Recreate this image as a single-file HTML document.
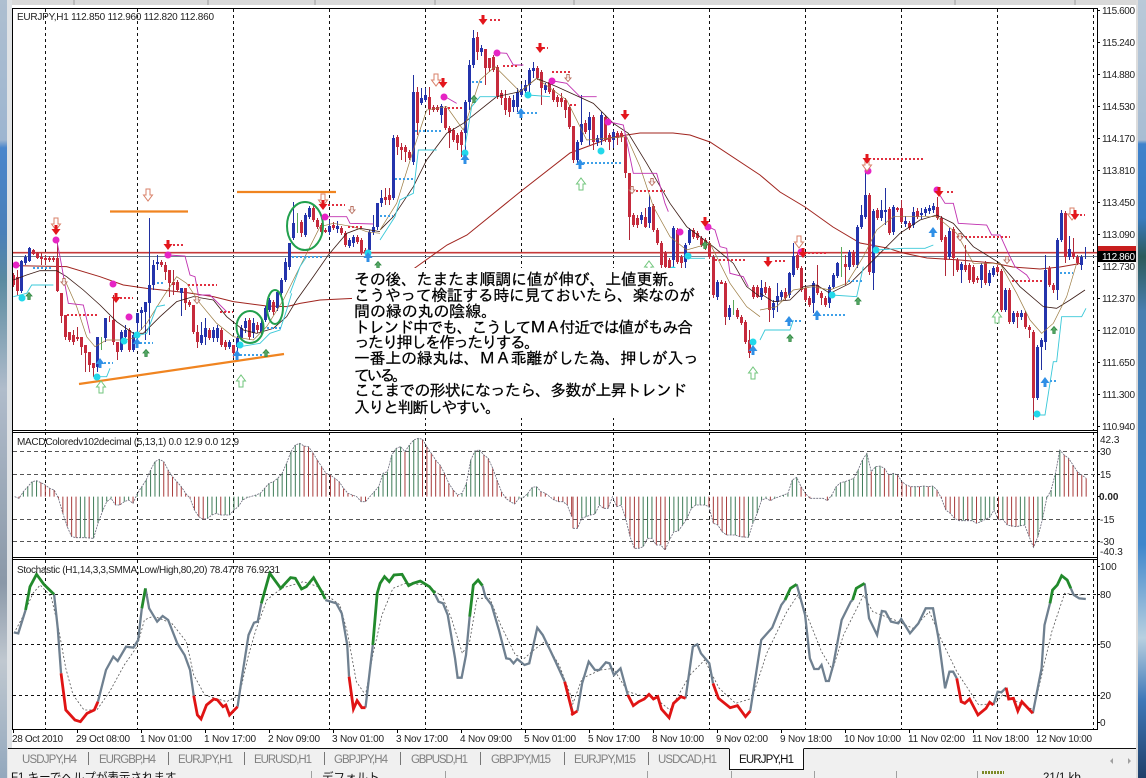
<!DOCTYPE html>
<html><head><meta charset="utf-8"><style>
html,body{margin:0;padding:0;background:#fff;overflow:hidden}
svg{display:block}
text{font-family:"Liberation Sans",Arial,sans-serif}
circle{r:3.5px}
.l{vector-effect:non-scaling-stroke;fill:none}
.ax{font-size:10px;fill:#222}
.t{font-size:10px;fill:#222}
.tb{font-size:11.5px;fill:#808080}
.jp{font-family:"IPAGothic","Noto Sans CJK JP",sans-serif;font-size:16px;fill:#000;stroke:#000;stroke-width:.25px}
</style></head><body>
<svg xmlns="http://www.w3.org/2000/svg" width="1146" height="778" viewBox="0 0 1146 778">
<defs>
<linearGradient id="fl" x1="0" y1="0" x2="0" y2="1">
<stop offset="0" stop-color="#aebfd0"/><stop offset=".18" stop-color="#9db5d0"/><stop offset=".19" stop-color="#4a86cc"/><stop offset=".3" stop-color="#4a7fb8"/><stop offset=".36" stop-color="#5a8aa0"/><stop offset=".5" stop-color="#b0bccb"/><stop offset=".75" stop-color="#8a98a8"/><stop offset=".85" stop-color="#c0c8d0"/><stop offset="1" stop-color="#93a8bd"/>
</linearGradient>
<linearGradient id="fr" x1="0" y1="0" x2="0" y2="1">
<stop offset="0" stop-color="#b9c9d8"/><stop offset=".18" stop-color="#a8bdd3"/><stop offset=".185" stop-color="#3f82cc"/><stop offset=".28" stop-color="#3a7cc0"/><stop offset=".33" stop-color="#2c5a5a"/><stop offset=".4" stop-color="#4a7fb0"/><stop offset=".7" stop-color="#3f86cc"/><stop offset=".82" stop-color="#b8d0e0"/><stop offset=".9" stop-color="#3f78b8"/><stop offset="1" stop-color="#20406a"/>
</linearGradient>
<path id="rd" d="M-1.5-5H1.5V-1H4.5L0 5-4.5-1H-1.5Z" fill="#e3161c"/>
<path id="bu" d="M-1.5 5H1.5V1H4.5L0-5-4.5 1H-1.5Z" fill="#2f8fe6"/>
<path id="hd" d="M-2-6H2V0H4.5L0 6-4.5 0H-2Z" fill="#fff" stroke="#d88068" stroke-width="1"/>
<path id="hds" d="M-1.2-3.5H1.2V0H3L0 3.5-3 0H-1.2Z" fill="#fff" stroke="#b87060" stroke-width=".9"/>
<path id="hu" d="M-2 6H2V0H4.5L0-6-4.5 0H-2Z" fill="#fff" stroke="#72c67c" stroke-width="1"/>
<path id="hus" d="M-1.2 3.5H1.2V0H3L0-3.5-3 0H-1.2Z" fill="#58a868" stroke="#2f8840" stroke-width=".8"/>
</defs>

<rect width="1146" height="778" fill="#fff"/>
<rect x="0" y="0" width="1146" height="5" fill="#d9d9d9"/>
<path d="M74 0V5M208 0V5M315 0V5M435 0V5M574 0V5M955 0V5M1075 0V5" stroke="#9a9a9a"/>
<rect x="0" y="0" width="7" height="778" fill="url(#fl)"/>
<rect x="7" y="0" width="5" height="778" fill="#dfe2e5"/>
<rect x="1136" y="0" width="2" height="778" fill="#dcdcdc"/>
<rect x="1138" y="0" width="8" height="778" fill="url(#fr)"/>

<!-- grid -->
<g stroke="#111" stroke-width="1" stroke-dasharray="3 3" fill="none">
<path d="M45.5 9V430M137.5 9V430M233.5 9V430M329.5 9V430M425.5 9V430M521.5 9V430M613.5 9V430M709.5 9V430M805.5 9V430M901.5 9V430M997.5 9V430M1093.5 9V430"/>
<path d="M45.5 432V557M137.5 432V557M233.5 432V557M329.5 432V557M425.5 432V557M521.5 432V557M613.5 432V557M709.5 432V557M805.5 432V557M901.5 432V557M997.5 432V557M1093.5 432V557"/>
<path d="M45.5 560V729M137.5 560V729M233.5 560V729M329.5 560V729M425.5 560V729M521.5 560V729M613.5 560V729M709.5 560V729M805.5 560V729M901.5 560V729M997.5 560V729M1093.5 560V729"/>
<path d="M13 594.5H1097M13 644.5H1097M13 695.5H1097"/>
</g>
<path d="M13 451.5H1097M13 474.5H1097M13 519.5H1097M13 541.5H1097" stroke="#555" stroke-dasharray="4 3" fill="none"/>

<!-- price lines -->
<path d="M13 252.7H1097" stroke="#c63a3a" stroke-width="1.6"/>
<path d="M13 256.5H1097" stroke="#6f8090" stroke-width="1"/>

<!-- slow MA -->
<g transform="scale(.33333)"><path class="l" stroke="#a0241e" stroke-width="1" d="M40 797L200 800 300 830 370 855 440 865 560 878 640 890 700 905 800 918 860 920 900 910 960 900 1060 895"/></g>
<path class="l" stroke="#a0241e" stroke-width="1" d="M412 270L447 245 467 235 520 192 570 153 613 137 640 133 673 133 690 135 710 142 760 175 780 192 805 207 833 227 860 243 887 248 903 253 927 258 960 260 993 263 1013 267 1040 269 1060 267 1083 263"/>

<!-- candle wicks -->
<path stroke="#2030a0" stroke-width="1" fill="none" d="M21.5 260V293M25.5 255V265M29.5 247V262M97.5 337V372M105.5 318V342M121.5 330V352M125.5 325V340M133.5 332V352M137.5 313V345M141.5 307V330M145.5 302V340M149.5 218V335M153.5 260V290M157.5 255V270M181.5 288V316M201.5 322V345M205.5 318V345M213.5 327V342M217.5 325V342M229.5 340V349M237.5 336V352M241.5 325V340M245.5 318V333M253.5 318V338M261.5 320V335M265.5 306V322M269.5 298V312M277.5 290V311M281.5 278V295M285.5 258V282M289.5 243V270M293.5 202V240M305.5 213V237M309.5 206V219M329.5 220V235M337.5 221V233M349.5 238V248M353.5 235V247M369.5 230V255M373.5 215V235M377.5 203V230M381.5 190V207M393.5 135V200M413.5 75V165M421.5 88V105M425.5 88V102M441.5 104V123M465.5 100V150M469.5 60V110M473.5 30V68M481.5 45V56M513.5 95V112M517.5 88V112M521.5 84V97M525.5 80V93M529.5 68V95M533.5 62V78M545.5 83V93M577.5 140V163M581.5 95V145M589.5 112V145M597.5 135V146M601.5 112V145M613.5 130V148M641.5 212V224M649.5 195V228M673.5 226V270M685.5 243V268M689.5 228V245M717.5 280V300M729.5 305V320M761.5 280V300M773.5 300V318M777.5 283V312M781.5 290V300M789.5 272V298M793.5 243V277M813.5 281V313M829.5 285V308M833.5 273V289M837.5 262V278M849.5 250V270M857.5 225V268M861.5 205V229M865.5 172V219M873.5 209V290M881.5 200V221M885.5 188V225M893.5 205V235M905.5 216V227M913.5 207V228M921.5 208V219M925.5 207V216M929.5 205V214M933.5 203V213M949.5 228V259M961.5 262V283M981.5 263V288M989.5 270V286M993.5 266V277M1005.5 288V312M1013.5 311V324M1021.5 310V320M1037.5 345V400M1041.5 338V370M1045.5 255V350M1057.5 238V300M1061.5 210V242M1069.5 236V260M1081.5 255V270M1085.5 247V259"/>
<path stroke="#b02838" stroke-width="1" fill="none" d="M13.5 273V287M17.5 270V295M33.5 249V255M37.5 252V259M41.5 253V265M45.5 255V265M49.5 256V262M53.5 256V262M57.5 240V292M61.5 293V323M65.5 315V340M69.5 332V342M73.5 330V345M77.5 327V341M81.5 337V355M85.5 345V372M89.5 352V372M93.5 363V377M109.5 316V322M113.5 295V345M117.5 342V360M129.5 328V352M161.5 260V267M165.5 262V280M169.5 270V297M173.5 270V295M177.5 280V292M185.5 288V310M189.5 300V307M193.5 305V334M197.5 325V348M209.5 328V340M221.5 328V347M225.5 340V350M233.5 345V358M249.5 318V340M257.5 322V333M273.5 300V315M301.5 220V237M313.5 206V222M317.5 218V229M321.5 223V234M325.5 228V233M333.5 222V230M341.5 226V235M345.5 231V247M357.5 235V244M361.5 238V255M365.5 248V255M385.5 188V205M389.5 188V205M397.5 135V155M401.5 143V160M405.5 145V162M409.5 150V160M417.5 87V135M429.5 87V115M433.5 105V112M437.5 105V112M445.5 106V130M449.5 126V148M453.5 128V142M457.5 133V150M461.5 130V157M477.5 32V60M485.5 49V85M489.5 58V72M493.5 55V72M497.5 65V99M501.5 90V105M505.5 90V115M509.5 96V117M537.5 66V80M541.5 70V105M549.5 80V94M553.5 88V102M557.5 95V107M561.5 93V107M565.5 98V118M569.5 105V129M573.5 126V163M585.5 120V134M593.5 115V150M605.5 115V142M609.5 133V150M617.5 131V145M621.5 131V142M625.5 135V178M629.5 173V240M633.5 213V227M637.5 215V228M645.5 208V228M653.5 204V232M657.5 228V245M661.5 241V270M665.5 251V270M669.5 258V270M677.5 228V264M681.5 255V268M693.5 228V239M697.5 231V240M701.5 236V247M705.5 238V250M709.5 241V259M713.5 255V298M721.5 280V284M725.5 281V325M737.5 308V319M741.5 315V325M745.5 320V344M749.5 330V358M753.5 285V299M757.5 285V298M765.5 282V295M769.5 286V322M785.5 288V300M797.5 253V270M801.5 266V292M805.5 286V302M809.5 296V307M817.5 265V295M821.5 291V305M825.5 296V307M845.5 255V285M853.5 250V267M869.5 193V275M877.5 208V220M889.5 207V235M897.5 207V212M901.5 200V224M909.5 221V230M917.5 208V219M937.5 197V220M941.5 216V242M945.5 235V276M953.5 227V276M957.5 258V272M965.5 245V272M969.5 263V283M973.5 265V284M977.5 276V283M985.5 261V285M997.5 265V274M1001.5 269V312M1009.5 288V324M1017.5 311V328M1025.5 311V329M1029.5 325V338M1033.5 330V420M1049.5 266V287M1053.5 283V293M1065.5 211V263M1073.5 238V259M1077.5 255V265"/>
<!-- candle bodies -->
<path stroke="#2434ac" stroke-width="3" fill="none" d="M21.5 261V291M25.5 257V263M29.5 248V261M97.5 337V367M105.5 318V338M121.5 332V350M125.5 330V337M133.5 335V350M137.5 313V323M141.5 310V313M145.5 302V312M149.5 285V303M153.5 265V285M157.5 262V264M181.5 288V293M201.5 335V343M205.5 328V337M213.5 330V338M217.5 328V338M229.5 342V347M237.5 338V347M241.5 328V338M245.5 321V328M253.5 323V333M261.5 323V332M265.5 308V320M269.5 300V310M277.5 292V308M281.5 280V293M285.5 262V280M289.5 243V267M293.5 223V238M305.5 215V235M309.5 208V217M329.5 226V232M337.5 226V229M349.5 240V246M353.5 237V243M369.5 232V250M373.5 227V232M377.5 203V227M381.5 198V203M393.5 138V198M413.5 92V162M421.5 98V103M425.5 95V100M441.5 106V115M465.5 102V133M469.5 65V102M473.5 38V65M481.5 48V52M513.5 100V107M517.5 92V107M521.5 89V95M525.5 85V91M529.5 70V85M533.5 68V71M545.5 85V90M577.5 142V160M581.5 124V142M589.5 117V130M597.5 138V142M601.5 115V140M613.5 132V140M641.5 215V220M649.5 207V223M673.5 228V260M685.5 245V262M689.5 230V243M717.5 282V297M729.5 308V317M761.5 288V297M773.5 303V310M777.5 296V302M781.5 292V297M789.5 273V295M793.5 256V275M813.5 283V303M829.5 287V303M833.5 275V287M837.5 263V276M849.5 252V267M857.5 227V265M861.5 215V227M865.5 195V217M873.5 211V273M881.5 210V218M885.5 210V212M893.5 207V232M905.5 221V224M913.5 212V225M921.5 213V215M925.5 209V213M929.5 208V211M933.5 206V210M949.5 231V257M961.5 264V270M981.5 265V280M989.5 273V283M993.5 268V275M1005.5 290V310M1013.5 313V322M1021.5 313V317M1037.5 347V398M1041.5 340V347M1045.5 270V342M1057.5 240V290M1061.5 213V240M1069.5 249V257M1081.5 257V265"/>
<path stroke="#c62a3c" stroke-width="3" fill="none" d="M13.5 275V285M17.5 277V291M33.5 250V254M37.5 253V258M41.5 257V259M45.5 258V260M49.5 258V260M53.5 258V260M57.5 258V291M61.5 293V316M65.5 315V337M69.5 332V340M73.5 335V342M77.5 337V339M81.5 337V347M85.5 345V353M89.5 352V365M93.5 363V368M113.5 320V342M117.5 342V352M129.5 330V350M161.5 262V265M165.5 265V272M169.5 270V283M173.5 282V285M177.5 282V290M185.5 288V303M189.5 302V305M193.5 305V332M197.5 332V342M209.5 330V338M221.5 330V345M225.5 342V347M233.5 345V353M249.5 320V337M257.5 325V330M273.5 302V312M301.5 222V233M313.5 208V220M317.5 220V227M321.5 225V232M325.5 230V232M333.5 225V228M341.5 228V233M345.5 233V245M357.5 237V242M361.5 240V253M365.5 250V253M385.5 197V200M389.5 195V200M397.5 137V147M401.5 147V150M405.5 147V152M409.5 152V158M417.5 92V123M429.5 97V109M433.5 107V110M437.5 107V110M445.5 108V128M449.5 128V133M453.5 130V140M457.5 135V143M461.5 132V145M477.5 37V52M485.5 49V68M489.5 58V68M493.5 57V70M497.5 67V97M501.5 93V98M505.5 98V110M509.5 98V112M537.5 68V78M541.5 72V88M549.5 82V92M553.5 90V100M557.5 97V102M561.5 98V102M565.5 100V110M569.5 107V127M573.5 126V160M585.5 123V132M593.5 117V142M605.5 117V140M609.5 135V142M617.5 133V138M621.5 133V137M625.5 137V173M629.5 173V217M633.5 215V225M637.5 218V225M645.5 217V227M653.5 206V230M657.5 230V243M661.5 243V265M665.5 253V267M669.5 260V272M677.5 230V262M681.5 257V263M693.5 230V237M697.5 233V238M701.5 238V245M705.5 240V248M709.5 243V257M713.5 257V295M721.5 282V284M725.5 283V317M737.5 310V317M741.5 317V323M745.5 322V342M749.5 340V353M753.5 287V297M757.5 287V297M765.5 287V293M769.5 288V310M785.5 292V298M797.5 255V268M801.5 268V290M805.5 288V300M809.5 298V305M817.5 285V293M821.5 293V298M825.5 298V305M845.5 264V267M853.5 252V265M869.5 195V272M877.5 210V218M889.5 209V233M897.5 208V210M901.5 208V222M909.5 223V228M917.5 211V217M937.5 207V218M941.5 218V240M945.5 237V260M953.5 229V258M957.5 260V270M965.5 265V270M969.5 265V280M973.5 267V282M977.5 278V280M985.5 263V283M997.5 267V272M1001.5 271V310M1009.5 290V322M1017.5 313V317M1025.5 313V327M1029.5 327V330M1033.5 332V398M1049.5 268V285M1053.5 285V290M1065.5 213V257M1073.5 252V257M1077.5 257V263"/>
<path stroke="#58a858" stroke-width="1" fill="none" d="M101.5 337V350M297.5 213V233M733.5 300V315M841.5 247V277"/>

<!-- MAs z1 -->
<g transform="scale(.33333)">
<path class="l" stroke="#3a1a14" stroke-width=".8" d="M40 840L80 825 120 812 170 812 200 830 250 870 300 915 350 965 400 1000 430 1000 480 950 530 905 580 890 640 900 680 950 730 990 770 1000 820 985 860 950 890 900 940 830 985 765 1040 700 1080 685 1140 695"/>
<path class="l" stroke="#9a7a40" stroke-width=".7" d="M190 830L230 920 260 1010 285 1040 320 1020 370 1020 400 1015 440 970 490 890 530 830 560 850 600 910 650 970 700 1010 760 1020 800 980 850 900 910 780 960 680 1000 670 1060 680 1100 695 1140 700"/>
<path class="l" stroke="#38c8d8" stroke-width=".9" d="M40 890L80 880 95 855 160 855M400 1010L440 1000 470 920 495 915M280 1130L320 1130 330 1105M720 1040L780 1030 810 1000 840 990 860 930 875 880M870 880L900 800 920 770"/>
<path class="l" stroke="#c030b0" stroke-width=".9" d="M170 720L180 770 205 910 250 915 270 1000M505 765L555 768 570 825 585 830 595 885 630 885 680 935M975 650L1040 650 1050 670 1120 672"/>
</g>
<g transform="translate(380,0) scale(.33333)">
<path class="l" stroke="#3a1a14" stroke-width=".8" d="M0 690L40 650 100 560 140 480 200 400 250 370 350 290 420 275 470 235 530 260 640 310 700 370 745 400 800 490 870 610 920 680 1000 740 1060 790 1100 860 1140 890"/>
<path class="l" stroke="#9a7a40" stroke-width=".7" d="M0 690L50 610 100 450 140 330 200 320 250 390 300 240 345 200 420 275 470 235 560 300 620 420 740 410 780 500 820 620 870 710 920 750 990 730 1050 850 1100 920 1140 950"/>
<path class="l" stroke="#38c8d8" stroke-width=".9" d="M0 720L45 650 60 600 100 580 115 450 170 450M255 440L265 380 275 320 300 290 350 290M445 285L510 290M925 775L975 775"/>
<path class="l" stroke="#c030b0" stroke-width=".9" d="M195 290L230 310M350 158L380 160 400 195 430 195M520 243L560 250 600 290 650 290M685 365L730 375 760 520 830 520 855 610 865 635M985 680L1005 690 1020 740 1040 745 1050 820 1090 830 1105 860"/>
</g>
<g transform="translate(760,0) scale(.33333)">
<path class="l" stroke="#3a1a14" stroke-width=".8" d="M0 880L40 905 90 900 130 860 170 855 210 880 270 850 320 800 360 760 420 700 480 660 530 645 580 670 640 740 720 790 780 860 850 920 890 925 930 900 975 870"/>
<path class="l" stroke="#9a7a40" stroke-width=".7" d="M0 930L50 920 100 870 160 860 210 870 260 850 310 770 350 690 400 650 470 650 530 650 590 700 640 790 720 790 770 880 810 960 845 1000 880 970 920 890 950 790"/>
<path class="l" stroke="#38c8d8" stroke-width=".9" d="M0 1020L15 990 90 990 100 960M215 885L290 890 310 800M345 750L430 745 495 745 520 735M830 1245L855 1245 880 1085 890 1085 905 950 965 950 978 925"/>
<path class="l" stroke="#c030b0" stroke-width=".9" d="M530 570L555 610 580 610 595 670 680 675 695 705 720 705 745 760 765 800 800 825 810 840"/>
</g>

<!-- dotted levels -->
<path stroke="#e03040" stroke-width="2" stroke-dasharray="2 2" fill="none" d="M67 315H97M120 298H133M173 245H185M188 285H217M220 312H233M328 205H345M348 227H363M490 20H502M448 108H462M503 66H517M543 48H548M552 72H570M570 105H577M632 191H665M715 260H745M775 261H785M808 253H828M873 159H925M947 192H953M957 237H1010M1012 281H1042M1080 215H1085"/>
<path stroke="#3ea0e8" stroke-width="2" stroke-dasharray="2 2" fill="none" d="M33 268H53M100 363H113M140 343H153M157 283H165M240 355H262M292 257H322M267 328H282M472 82H482M415 131H442M395 179H413M380 216H393M523 113H537M583 163H622M795 321H802M823 315H845M848 281H862M1050 381H1058M1060 273H1073"/>

<!-- orange trend lines & circles -->
<path d="M79 384L284 354M110 211.5H188M237 192H336" stroke="#f08420" stroke-width="2.2" fill="none"/>
<g fill="none" stroke="#22a04e" stroke-width="2">
<ellipse cx="305" cy="226" rx="18" ry="24"/><ellipse cx="250" cy="327" rx="13.5" ry="16"/><ellipse cx="275" cy="307" rx="8" ry="17"/>
</g>

<!-- magenta / cyan dots -->
<g fill="#e624c4"><circle cx="16" cy="265" r="3"/><circle cx="56" cy="240" r="3"/><circle cx="113" cy="284" r="3"/><circle cx="129" cy="317" r="3"/><circle cx="168" cy="255" r="3"/><circle cx="325" cy="217" r="3"/><circle cx="444" cy="97" r="3"/><circle cx="497" cy="53" r="3"/><circle cx="552" cy="81" r="3"/><circle cx="608" cy="122" r="3"/><circle cx="680" cy="232" r="3"/><circle cx="708" cy="227" r="3"/><circle cx="801" cy="252" r="3"/><circle cx="868" cy="171" r="3"/><circle cx="937" cy="190" r="3"/></g>
<g fill="#22d8ea"><circle cx="22" cy="298" r="3"/><circle cx="97" cy="377" r="3"/><circle cx="124" cy="341" r="3"/><circle cx="137" cy="335" r="3"/><circle cx="240" cy="345" r="3"/><circle cx="368" cy="253" r="3"/><circle cx="465" cy="153" r="3"/><circle cx="528" cy="95" r="3"/><circle cx="601" cy="151" r="3"/><circle cx="688" cy="256" r="3"/><circle cx="673" cy="270" r="3"/><circle cx="753" cy="342" r="3"/><circle cx="832" cy="295" r="3"/><circle cx="876" cy="250" r="3"/><circle cx="1037" cy="414" r="3"/></g>

<!-- arrows -->
<use href="#hd" x="56" y="224"/><use href="#hd" x="148" y="195"/><use href="#hd" x="323" y="200"/><use href="#hd" x="436" y="80"/><use href="#hd" x="867" y="165"/><use href="#hd" x="799" y="242"/><use href="#hd" x="1072" y="214"/>
<use href="#hds" x="64" y="282"/><use href="#hds" x="352" y="210"/><use href="#hds" x="197" y="300"/><use href="#hds" x="568" y="78"/><use href="#hds" x="652" y="182"/><use href="#hds" x="632" y="190"/><use href="#hds" x="960" y="237"/><use href="#hds" x="1007" y="260"/>
<use href="#rd" x="56" y="230"/><use href="#rd" x="116" y="298"/><use href="#rd" x="168" y="245"/><use href="#rd" x="323" y="205"/><use href="#rd" x="483" y="20"/><use href="#rd" x="443" y="83"/><use href="#rd" x="540" y="48"/><use href="#rd" x="625" y="115"/><use href="#rd" x="705" y="222"/><use href="#rd" x="768" y="262"/><use href="#rd" x="803" y="253"/><use href="#rd" x="867" y="159"/><use href="#rd" x="939" y="192"/><use href="#rd" x="1075" y="215"/>
<use href="#bu" x="100" y="363"/><use href="#bu" x="137" y="343"/><use href="#bu" x="237" y="355"/><use href="#bu" x="368" y="257"/><use href="#bu" x="465" y="159"/><use href="#bu" x="521" y="113"/><use href="#bu" x="580" y="164"/><use href="#bu" x="753" y="350"/><use href="#bu" x="789" y="321"/><use href="#bu" x="817" y="315"/><use href="#bu" x="933" y="232"/><use href="#bu" x="1045" y="382"/>
<use href="#hu" x="101" y="387"/><use href="#hu" x="241" y="381"/><use href="#hu" x="581" y="184"/><use href="#hu" x="649" y="267"/><use href="#hu" x="753" y="373"/><use href="#hu" x="997" y="317"/>
<use href="#hus" x="29" y="296"/><use href="#hus" x="146" y="353"/><use href="#hus" x="266" y="353"/><use href="#hus" x="378" y="265"/><use href="#hus" x="474" y="99"/><use href="#hus" x="705" y="245"/><use href="#hus" x="790" y="338"/><use href="#hus" x="858" y="301"/><use href="#hus" x="1054" y="330"/>

<!-- annotation box -->
<rect x="352" y="268" width="350" height="150" fill="#fff"/>
<g class="jp">
<text class="jp" x="354" y="285" textLength="330">その後、たまたま順調に値が伸び、上値更新。</text>
<text class="jp" x="354" y="301" textLength="341">こうやって検証する時に見ておいたら、楽なのが</text>
<text class="jp" x="354" y="317" textLength="143">間の緑の丸の陰線。</text>
<text class="jp" x="354" y="333" textLength="339">トレンド中でも、こうしてＭＡ付近では値がもみ合</text>
<text class="jp" x="354" y="348" textLength="186">ったり押しを作ったりする。</text>
<text class="jp" x="354" y="364" textLength="345">一番上の緑丸は、ＭＡ乖離がした為、押しが入っ</text>
<text class="jp" x="354" y="381" textLength="54">ている。</text>
<text class="jp" x="354" y="396" textLength="333">ここまでの形状になったら、多数が上昇トレンド</text>
<text class="jp" x="354" y="413" textLength="147">入りと判断しやすい。</text>
</g>

<!-- MACD hist -->
<g transform="translate(0,430) scale(.3655,.33333)">
<path class="l" stroke="#3f7c58" stroke-width="1" d="M64 200V185M76 200V170M88 200V155M100 200V152M220 200V323M232 200V323M256 200V325M268 200V280M280 200V245M292 200V215M304 200V205M340 200V215M352 200V210M376 200V190M388 200V170M400 200V150M412 200V120M424 200V95M436 200V88M568 200V265M580 200V255M592 200V250M616 200V255M628 200V255M640 200V240M652 200V230M664 200V210M676 200V203M700 200V195M712 200V190M724 200V175M736 200V160M748 200V155M760 200V145M772 200V130M784 200V100M796 200V65M808 200V45M820 200V40M1024 200V185M1036 200V170M1048 200V130M1060 200V125M1072 200V75M1084 200V55M1096 200V50M1120 200V45M1132 200V30M1144 200V25M1264 200V190M1276 200V160M1288 200V90M1300 200V62M1312 200V60M1420 200V205M1432 200V203M1444 200V190M1456 200V172M1468 200V170"/>
<path class="l" stroke="#a83c3c" stroke-width="1" d="M52 200V205M112 200V158M124 200V165M136 200V175M148 200V180M160 200V205M172 200V250M184 200V290M196 200V320M208 200V323M244 200V325M316 200V225M328 200V225M364 200V220M448 200V95M460 200V120M472 200V140M484 200V155M496 200V170M508 200V190M520 200V205M532 200V240M544 200V260M556 200V268M604 200V255M832 200V48M844 200V50M856 200V68M868 200V90M880 200V110M892 200V130M904 200V135M916 200V145M928 200V155M940 200V175M952 200V190M964 200V195M988 200V215M1000 200V215M1108 200V65M1156 200V28M1168 200V50M1180 200V70M1192 200V90M1204 200V105M1216 200V130M1228 200V160M1240 200V180M1252 200V195M1324 200V75M1336 200V85M1348 200V115M1360 200V150M1372 200V185M1384 200V205M1396 200V215M1408 200V222M1480 200V185M1492 200V190M1516 200V210M1528 200V215M1540 200V215M1552 200V225M1564 200V260"/>
<path class="l" stroke="#667" stroke-width=".8" stroke-dasharray="2 1" d="M40 200L52 205 64 185 76 170 88 155 100 152 112 158 124 165 136 175 148 180 160 205 172 250 184 290 196 320 208 323 232 323 256 325 268 280 280 245 292 215 304 205 316 225 328 225 340 215 352 210 364 220 376 190 388 170 400 150 412 120 424 95 436 88 448 95 460 120 472 140 484 155 496 170 508 190 520 205 532 240 544 260 556 268 568 265 580 255 592 250 604 255 628 255 640 240 652 230 664 210 676 203 700 195 712 190 724 175 736 160 748 155 760 145 772 130 784 100 796 65 808 45 820 40 832 48 844 50 856 68 868 90 880 110 892 130 904 135 916 145 928 155 940 175 952 190 964 195 976 200 988 215 1000 215 1012 200 1024 185 1036 170 1048 130 1060 125 1072 75 1084 55 1096 50 1108 65 1120 45 1132 30 1144 25 1156 28 1168 50 1180 70 1192 90 1204 105 1216 130 1228 160 1240 180 1252 195 1264 190 1276 160 1288 90 1300 62 1312 60 1324 75 1336 85 1348 115 1360 150 1372 185 1384 205 1396 215 1408 222 1420 205 1432 203 1444 190 1456 172 1468 170 1480 185 1492 190 1504 200 1516 210 1528 215 1540 215 1552 225 1564 260"/>
</g>
<g transform="translate(573,430) scale(.3655,.33333)">
<path class="l" stroke="#3f7c58" stroke-width="1" d="M24 200V265M36 200V260M48 200V255M60 200V252M72 200V225M108 200V200M132 200V225M192 200V350M204 200V325M216 200V325M264 200V330M276 200V305M288 200V303M300 200V285M312 200V265M324 200V235M336 200V225M348 200V225M360 200V225M432 200V315M444 200V315M480 200V322M492 200V280M504 200V250M516 200V210M528 200V205M552 200V205M576 200V195M588 200V190M600 200V150M612 200V142M708 200V195M720 200V170M732 200V158M744 200V155M756 200V150M768 200V145M780 200V120M792 200V90M804 200V70M828 200V110M840 200V108M876 200V130M936 200V170M960 200V168M984 200V168M1068 200V272M1092 200V272M1116 200V275M1128 200V268M1140 200V262M1152 200V240M1176 200V268M1224 200V288M1236 200V285M1272 200V320M1284 200V270M1296 200V205M1308 200V180M1320 200V130M1332 200V60"/>
<path class="l" stroke="#a83c3c" stroke-width="1" d="M0 200V295M12 200V295M84 200V235M96 200V235M120 200V230M144 200V265M156 200V320M168 200V355M180 200V355M228 200V345M240 200V345M252 200V360M372 200V230M384 200V280M396 200V285M408 200V305M420 200V315M456 200V320M468 200V322M540 200V212M624 200V170M636 200V190M648 200V205M696 200V212M816 200V125M852 200V115M864 200V135M888 200V135M900 200V155M912 200V165M924 200V170M948 200V170M972 200V170M996 200V180M1008 200V205M1020 200V240M1032 200V250M1044 200V265M1056 200V272M1080 200V272M1104 200V280M1164 200V270M1188 200V285M1200 200V290M1212 200V290M1248 200V320M1260 200V352M1344 200V75M1356 200V85M1368 200V105M1380 200V125M1392 200V135M1404 200V145"/>
<path class="l" stroke="#667" stroke-width=".8" stroke-dasharray="2 1" d="M0 295L12 295 24 265 36 260 48 255 60 252 72 225 84 235 96 235 108 200 120 230 132 225 144 265 156 320 168 355 180 355 192 350 204 325 216 325 228 345 240 345 252 360 264 330 276 305 288 303 300 285 312 265 324 235 336 225 360 225 372 230 384 280 396 285 408 305 420 315 444 315 456 320 480 322 492 280 504 250 516 210 528 205 540 212 552 205 564 200 576 195 588 190 600 150 612 142 624 170 636 190 648 205 684 205 696 212 708 195 720 170 732 158 744 155 756 150 768 145 780 120 792 90 804 70 816 125 828 110 840 108 852 115 864 135 876 130 888 135 900 155 912 165 924 170 948 170 960 168 972 170 984 168 996 180 1008 205 1020 240 1032 250 1044 265 1056 272 1092 272 1104 280 1116 275 1128 268 1140 262 1152 240 1164 270 1176 268 1188 285 1212 290 1236 285 1248 320 1260 352 1272 320 1284 270 1296 205 1308 180 1320 130 1332 60 1344 75 1356 85 1368 105 1380 125 1392 135 1404 145"/>
</g>

<!-- Stochastic -->
<g transform="translate(0,555) scale(.3655,.33333)">
<path class="l" stroke="#555" stroke-width=".8" stroke-dasharray="2 2" d="M38 235L60 190 90 115 110 90 140 125 160 220 180 340 200 420 230 465 265 465 300 410 340 330 375 275 395 195 420 183 470 205 510 260 530 360 560 420 620 440 655 420 680 300 700 225 730 135 770 100 830 80 870 95 900 125 930 150 950 230 975 380 1000 420 1020 300 1045 180 1075 100 1110 85 1170 90 1210 125 1235 190 1265 295 1285 260 1305 130 1340 130 1370 210 1410 300 1435 310 1455 290 1490 260 1530 330 1568 440"/>
<path class="l" stroke="#6f8090" stroke-width="2.3" d="M38 232L50 235 70 165M148 118L158 220 167 355M268 440L290 345 310 305 322 318 345 275 365 278 378 255 388 160M398 100L408 160 430 200 445 183 460 195 485 265 505 300 520 345 530 422M650 455L660 380 680 240 695 203 705 200 715 145M890 135L920 145 935 175 950 270 955 365M1000 458L1020 270M1190 118L1200 140 1212 145 1225 180 1245 310 1252 368 1263 368 1275 300 1285 185M1320 92L1328 125 1345 150 1365 225 1385 310 1395 312 1405 325 1415 312 1435 330 1448 325 1470 218 1485 240 1505 285 1520 320 1545 380"/>
<path class="l" stroke="#228a2c" stroke-width="2.8" d="M70 165L82 95 100 58 120 88 148 118M388 160L398 100M715 145L738 55 768 100 795 68 808 70 825 102 838 95 858 68 880 110 890 132M1020 270L1032 115 1040 85 1052 65 1065 80 1078 60 1100 58 1118 92 1130 85 1150 78 1175 95 1190 115M1285 185L1295 90 1308 75 1320 92"/>
<path class="l" stroke="#e01414" stroke-width="2.8" d="M167 355L180 465 205 495 220 500 238 475 258 465 268 440M530 422L540 480 550 492 565 450 585 432 595 435 610 455 618 450 628 480 650 455M955 365L967 462 977 437 990 458 1000 458M1545 380L1568 480"/>
</g>
<g transform="translate(573,555) scale(.3655,.33333)">
<path class="l" stroke="#555" stroke-width=".8" stroke-dasharray="2 2" d="M-5 460L25 370 75 345 110 340 150 410 180 420 220 425 265 465 320 360 360 315 400 400 445 445 490 430 530 295 585 170 615 120 640 180 680 290 710 345 740 240 795 120 820 170 880 195 930 220 975 170 1010 260 1050 350 1110 450 1155 445 1175 420 1215 440 1260 465 1310 230 1345 115 1385 120 1403 118"/>
<path class="l" stroke="#6f8090" stroke-width="2.3" d="M12 468L25 385 43 320 60 345 72 345 90 322 100 325 112 360 130 340 150 420M308 430L328 275 340 268 350 295 373 325 383 385M485 468L515 255 545 218 570 150 580 135M612 88L635 180 648 310 660 342 672 342 680 330 692 378 700 378 712 330 735 195 760 140 765 135M798 85L810 190 832 240 845 168 855 170 870 200 890 205 898 192 922 235 945 205 965 160 985 160 1000 250 1018 400 1030 350 1040 350 1050 370M1150 450L1162 410 1172 412 1185 398M1258 475L1282 340 1290 210 1305 145M1362 100L1370 120 1385 130 1403 132"/>
<path class="l" stroke="#228a2c" stroke-width="2.8" d="M580 135L595 100 612 88M765 135L775 100 798 85M1305 145L1312 105 1325 90 1337 62 1352 75 1362 100"/>
<path class="l" stroke="#e01414" stroke-width="2.8" d="M-5 480L12 468M150 420L165 452 180 440 195 432 208 418 220 432 232 425 242 462 263 488 275 445 295 425 308 430M383 385L398 430 415 445 430 458 450 452 472 485 485 468M1050 370L1062 440 1072 445 1085 432 1108 480 1130 460 1140 442 1150 450M1185 398L1192 432 1205 430 1217 468 1228 440 1258 475"/>
</g>

<!-- frames -->
<path d="M12.5 8.5H1097.5V729.5H12.5ZM12.5 430.5H1097.5M12.5 432.5H1097.5M12.5 557.5H1097.5M12.5 559.5H1097.5" fill="none" stroke="#000"/>
<path d="M1097 42.5H1100M1097 10.5H1100M1097 74.5H1100M1097 106.5H1100M1097 138.5H1100M1097 170.5H1100M1097 202.5H1100M1097 234.5H1100M1097 266.5H1100M1097 298.5H1100M1097 330.5H1100M1097 362.5H1100M1097 394.5H1100M1097 426.5H1100M1097 451.5H1100M1097 474.5H1100M1097 496.5H1100M1097 519.5H1100M1097 541.5H1100M1097 566.5H1100M1097 594.5H1100M1097 644.5H1100M1097 695.5H1100M1097 722.5H1100M13.5 729V733M77.5 729V733M141.5 729V733M205.5 729V733M269.5 729V733M333.5 729V733M397.5 729V733M461.5 729V733M525.5 729V733M589.5 729V733M653.5 729V733M717.5 729V733M781.5 729V733M845.5 729V733M909.5 729V733M973.5 729V733M1037.5 729V733" stroke="#000" fill="none"/>

<!-- price axis -->
<g class="ax">
<text class="ax" x="1102" y="14" textLength="33">115.600</text>
<text class="ax" x="1102" y="46" textLength="33">115.240</text>
<text class="ax" x="1102" y="78" textLength="33">114.880</text>
<text class="ax" x="1102" y="110" textLength="33">114.530</text>
<text class="ax" x="1102" y="142" textLength="33">114.170</text>
<text class="ax" x="1102" y="174" textLength="33">113.810</text>
<text class="ax" x="1102" y="206" textLength="33">113.450</text>
<text class="ax" x="1102" y="238" textLength="33">113.090</text>
<text class="ax" x="1102" y="270" textLength="33">112.730</text>
<text class="ax" x="1102" y="302" textLength="33">112.370</text>
<text class="ax" x="1102" y="334" textLength="33">112.010</text>
<text class="ax" x="1102" y="366" textLength="33">111.650</text>
<text class="ax" x="1102" y="398" textLength="33">111.300</text>
<text class="ax" x="1102" y="430" textLength="33">110.940</text>
</g>
<rect x="1098" y="246" width="38" height="6" fill="#c81e1e"/>
<rect x="1098" y="251" width="38" height="11" fill="#000"/>
<text x="1102" y="260" font-size="10" fill="#fff" textLength="33">112.860</text>
<!-- macd axis -->
<text class="ax" x="1100" y="443">42.3</text>
<text class="ax" x="1100" y="455">30</text>
<text class="ax" x="1100" y="478">15</text>
<text class="ax" x="1099" y="500" font-weight="bold">0.00</text>
<text class="ax" x="1100" y="523">-15</text>
<text class="ax" x="1100" y="545">-30</text>
<text class="ax" x="1100" y="555">-40.3</text>
<!-- stoch axis -->
<text class="ax" x="1100" y="570">100</text>
<text class="ax" x="1100" y="598">80</text>
<text class="ax" x="1100" y="648">50</text>
<text class="ax" x="1100" y="699">20</text>
<text class="ax" x="1100" y="726">0</text>

<!-- headers -->
<text class="t" x="17" y="20" textLength="197">EURJPY,H1  112.850 112.960 112.820 112.860</text>
<text class="t" x="17" y="445" textLength="222">MACDColoredv102decimal (5,13,1) 0.0 12.9 0.0 12.9</text>
<text class="t" x="17" y="573" textLength="263">Stochastic (H1,14,3,3,SMMA,Low/High,80,20) 78.4778 76.9231</text>

<!-- time axis -->
<g class="t">
<text class="t" x="12" y="742" textLength="51">28 Oct 2010</text>
<text class="t" x="76" y="742" textLength="54">29 Oct 08:00</text>
<text class="t" x="140" y="742" textLength="52">1 Nov 01:00</text>
<text class="t" x="204" y="742" textLength="52">1 Nov 17:00</text>
<text class="t" x="268" y="742" textLength="52">2 Nov 09:00</text>
<text class="t" x="332" y="742" textLength="52">3 Nov 01:00</text>
<text class="t" x="396" y="742" textLength="52">3 Nov 17:00</text>
<text class="t" x="460" y="742" textLength="52">4 Nov 09:00</text>
<text class="t" x="524" y="742" textLength="52">5 Nov 01:00</text>
<text class="t" x="588" y="742" textLength="52">5 Nov 17:00</text>
<text class="t" x="652" y="742" textLength="52">8 Nov 10:00</text>
<text class="t" x="716" y="742" textLength="52">9 Nov 02:00</text>
<text class="t" x="780" y="742" textLength="52">9 Nov 18:00</text>
<text class="t" x="844" y="742" textLength="57">10 Nov 10:00</text>
<text class="t" x="908" y="742" textLength="57">11 Nov 02:00</text>
<text class="t" x="972" y="742" textLength="57">11 Nov 18:00</text>
<text class="t" x="1036" y="742" textLength="56">12 Nov 10:00</text>
</g>

<!-- tab bar -->
<rect x="8" y="749" width="1128" height="21" fill="#f0f0f0"/>
<path d="M8 748.5H729M804 748.5H1136" stroke="#111" fill="none"/>
<rect x="729" y="748" width="75" height="22" fill="#fff"/>
<path d="M729.5 748.5V769.5H803.5V748.5" stroke="#111" fill="none"/>
<path d="M88.5 752V765M168.5 752V765M244.5 752V765M324.5 752V765M400.5 752V765M480.5 752V765M564.5 752V765M648.5 752V765" stroke="#777"/>
<text class="tb" x="22" y="763" textLength="55">USDJPY,H4</text>
<text class="tb" x="99" y="763" textLength="57">EURGBP,H4</text>
<text class="tb" x="178" y="763" textLength="55">EURJPY,H1</text>
<text class="tb" x="254" y="763" textLength="58">EURUSD,H1</text>
<text class="tb" x="334" y="763" textLength="54">GBPJPY,H4</text>
<text class="tb" x="411" y="763" textLength="57">GBPUSD,H1</text>
<text class="tb" x="491" y="763" textLength="60">GBPJPY,M15</text>
<text class="tb" x="574" y="763" textLength="62">EURJPY,M15</text>
<text class="tb" x="658" y="763" textLength="59">USDCAD,H1</text>
<text x="739" y="763" font-size="11.5" fill="#111" textLength="55">EURJPY,H1</text>
<path d="M1113 758L1110 761 1113 764ZM1128 758L1131 761 1128 764Z" fill="#a0a0a0"/>

<!-- status bar -->
<rect x="8" y="770" width="1128" height="8" fill="#f0f0f0"/>
<path d="M311.5 771V778M445.5 771V778M647.5 771V778M731.5 771V778M814.5 771V778M896.5 771V778M977.5 771V778" stroke="#a0a0a0"/>
<text x="11" y="781" font-size="11.5" fill="#111" style="font-family:'Liberation Sans','Noto Sans CJK JP',sans-serif">F1 キーでヘルプが表示されます</text>
<text x="322" y="781" font-size="11.5" fill="#111" style="font-family:'Liberation Sans','Noto Sans CJK JP',sans-serif">デフォルト</text>
<path d="M982 772.5H1004" stroke="#7c8a28" stroke-width="3" stroke-dasharray="2 1"/>
<text x="1043" y="781" font-size="11.5" fill="#111">21/1 kb</text>
</svg>
</body></html>
